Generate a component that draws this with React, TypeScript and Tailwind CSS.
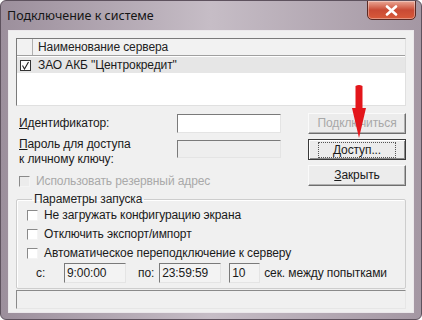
import React from "react";

const ui = { fontFamily: '"Liberation Sans", Arial, sans-serif' };

function Sunken({ w, value, bg = "bg-white", h = "h-[19px]" }: { w: string; value?: string; bg?: string; h?: string }) {
  return (
    <div
      className={`${w} ${h} ${bg} border-t-[#7a7a7a] border-l-[#7a7a7a] border-r-[#e4e4e4] border-b-[#e4e4e4] border flex items-center pl-[2px] text-[12px] text-[#1a1a1a]`}
    >
      {value}
    </div>
  );
}

function Check({ checked, disabled }: { checked?: boolean; disabled?: boolean }) {
  return (
    <div
      className={`w-[11px] h-[11px] shrink-0 border border-t-[#8a8a8a] border-l-[#8a8a8a] border-r-[#f4f4f4] border-b-[#f4f4f4] ${
        disabled ? "bg-[#ececec]" : "bg-white"
      } flex items-center justify-center`}
    >
      {checked && (
        <svg width="9" height="9" viewBox="0 0 9 9">
          <path d="M1.5 4.5 L3.5 7.5 L7.5 1" stroke="#222" strokeWidth="1.2" fill="none" />
        </svg>
      )}
    </div>
  );
}

function Btn({ children, disabled, def }: { children: React.ReactNode; disabled?: boolean; def?: boolean }) {
  return (
    <div
      className={`h-[21px] w-[98px] flex items-center justify-center text-[12px] bg-[#ececec] border ${
        def
          ? "border-[#3a3a3a] shadow-[inset_1px_1px_0_#fff,inset_-1px_-1px_0_#8a8a8a]"
          : "border-t-[#fafafa] border-l-[#fafafa] border-r-[#6e6e6e] border-b-[#6e6e6e] shadow-[inset_-1px_-1px_0_#b0b0b0]"
      } ${disabled ? "text-[#a8a8a8]" : "text-[#1a1a1a]"}`}
    >
      {def ? (
        <span className="px-[14px] outline outline-1 outline-dotted outline-[#555] leading-[14px]">{children}</span>
      ) : (
        children
      )}
    </div>
  );
}

export default function App() {
  return (
    <div
      className="w-[422px] h-[320px] overflow-hidden bg-gradient-to-r from-[#9c8f9c] via-[#c6bdc6] to-[#a497a3] rounded-[6px] border border-[#5e525e] flex flex-col"
      style={ui}
    >
      {/* title bar */}
      <div className="h-[29px] flex items-start justify-between pl-[6px] pr-[5px]">
        <div className="mt-[6px] text-[12.5px] text-[#151515]" style={{ fontFamily: '"Noto Sans", "Open Sans", sans-serif' }}>
          Подключение к системе
        </div>
        <div className="w-[49px] h-[20px] -mt-[1px] rounded-b-[5px] border border-[#5a2a24] bg-gradient-to-b from-[#e9a796] via-[#c94a34] to-[#d85a3a] flex items-center justify-center shadow-[inset_0_0_0_1px_rgba(255,255,255,0.35)]">
          <svg width="13" height="11" viewBox="0 0 13 11">
            <path d="M2 1.5 L11 9.5 M11 1.5 L2 9.5" stroke="#fff" strokeWidth="2.6" strokeLinecap="round" />
          </svg>
        </div>
      </div>

      {/* client */}
      <div className="mx-[7px] h-[283px] border border-[#ebe8eb] bg-[#f0f0f0] px-[7px] pt-[7px] text-[12px] leading-[15px] tracking-[-0.1px] text-[#1a1a1a] relative">
        {/* server list */}
        <div className="h-[68px] border border-t-[#7a7a7a] border-l-[#7a7a7a] border-r-[#e0e0e0] border-b-[#e0e0e0] bg-white flex flex-col">
          <div className="h-[17px] flex border-b border-[#a0a0a0] bg-[#f2f2f2]">
            <div className="w-[16px] border-r border-[#b0b0b0]" />
            <div className="pl-[5px] flex items-center text-[#222]">Наименование сервера</div>
          </div>
          <div className="h-[16px] mt-[1px] flex items-center bg-[#e6e6e6]">
            <div className="w-[16px] flex justify-center">
              <div className="w-[11px] h-[11px] border border-[#333] bg-white flex items-center justify-center">
                <svg width="9" height="9" viewBox="0 0 9 9">
                  <path d="M1.5 4.5 L3.5 8 L7.5 1" stroke="#222" strokeWidth="1.1" fill="none" />
                </svg>
              </div>
            </div>
            <div className="pl-[5px]">ЗАО АКБ "Центрокредит"</div>
          </div>
        </div>

        {/* credentials + buttons */}
        <div className="mt-[7px] flex justify-between">
          <div className="w-[265px] pl-[3px] flex flex-col">
            <div className="h-[21px] flex items-center justify-between">
              <span>
                <span className="underline">И</span>дентификатор:
              </span>
              <Sunken w="w-[104px]" />
            </div>
            <div className="mt-[2px] h-[34px] flex items-start justify-between">
              <div className="pt-[1px]">
                <span className="underline">П</span>ароль для доступа
                <br />к личному ключу:
              </div>
              <div className="mt-[4px]">
                <Sunken w="w-[104px]" bg="bg-[#eeeeee]" h="h-[18px]" />
              </div>
            </div>
            <div className="mt-[4px] flex items-center gap-[6px] text-[#a9a9a9]">
              <Check disabled />
              <span>Использовать резервный адрес</span>
            </div>
          </div>
          <div className="flex flex-col gap-[5px]">
            <Btn disabled>Подключиться</Btn>
            <Btn def>
              <span className="underline">Д</span>оступ...
            </Btn>
            <Btn>
              <span className="underline">З</span>акрыть
            </Btn>
          </div>
        </div>

        {/* startup params */}
        <fieldset className="mt-[3px] border border-[#cdcdcd] rounded-[2px] px-[10px] pb-[5px] shadow-[inset_1px_1px_0_#fff]">
          <legend className="px-[2px] ml-[5px] text-[#222]">Параметры запуска</legend>
          <div className="flex flex-col gap-[4px] mt-[1px]">
            <div className="flex items-center gap-[6px]">
              <Check />
              <span>Не загружать конфигурацию экрана</span>
            </div>
            <div className="flex items-center gap-[6px]">
              <Check />
              <span>Отключить экспорт/импорт</span>
            </div>
            <div className="flex items-center gap-[6px]">
              <Check />
              <span>Автоматическое переподключение к серверу</span>
            </div>
          </div>
          <div className="mt-[2px] flex items-center pl-[9px]">
            <span className="w-[28px]">с:</span>
            <Sunken w="w-[62px]" h="h-[20px]" bg="bg-[#f3f3f3]" value="9:00:00" />
            <span className="ml-[12px] mr-[5px]">по:</span>
            <Sunken w="w-[62px]" h="h-[20px]" bg="bg-[#f3f3f3]" value="23:59:59" />
            <div className="ml-[8px]">
              <Sunken w="w-[31px]" h="h-[20px]" bg="bg-[#f3f3f3]" value="10" />
            </div>
            <span className="ml-[4px]">сек. между попытками</span>
          </div>
        </fieldset>

        {/* status bar */}
        <div className="mt-[1px] h-[19px] border border-t-[#8a8a8a] border-l-[#8a8a8a] border-r-[#e6e6e6] border-b-[#e6e6e6] bg-[#f0f0f0]" />

        {/* red arrow overlay */}
        <svg className="absolute left-[340px] top-[53px]" width="20" height="54" viewBox="0 0 20 54">
          <path d="M6.5 2 Q10 0 13.5 2 L13.5 24 L17 24 L10 54 L3 24 L6.5 24 Z" fill="#e3161b" />
        </svg>
      </div>
    </div>
  );
}
